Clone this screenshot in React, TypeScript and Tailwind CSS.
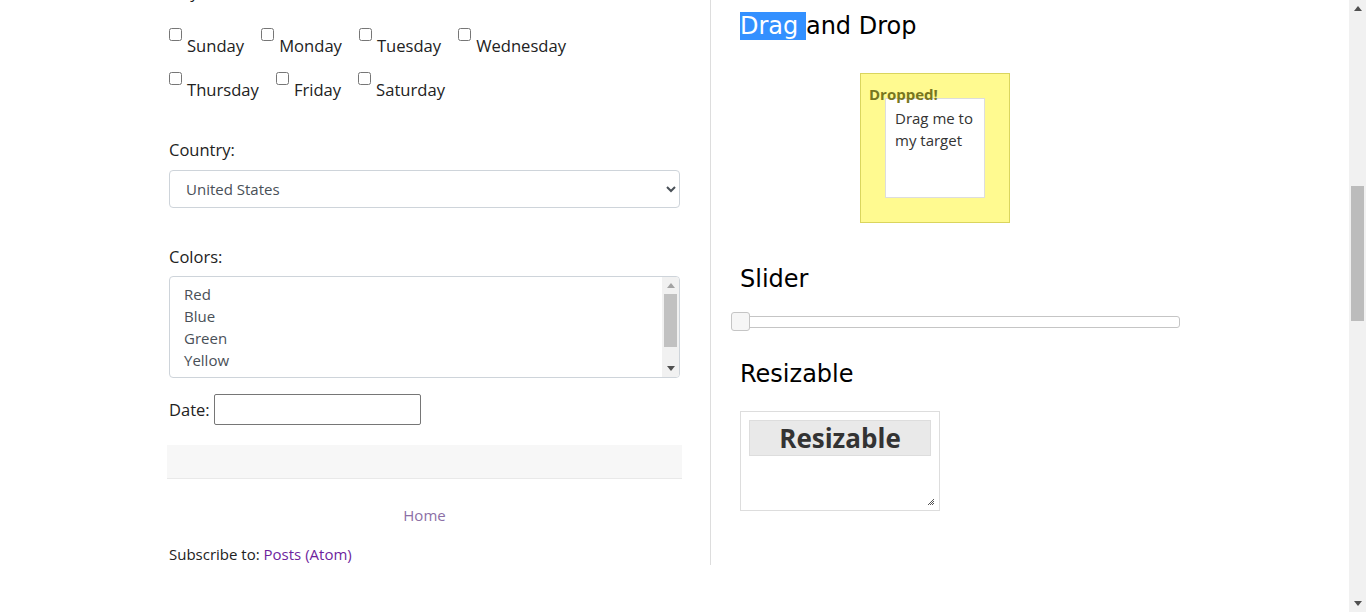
import { useState } from "react";

const days1 = ["Sunday", "Monday", "Tuesday", "Wednesday"];
const days2 = ["Thursday", "Friday", "Saturday"];
const colors = ["Red", "Blue", "Green", "Yellow", "White"];

function DayRow({ days }: { days: string[] }) {
  return (
    <div className="flex h-[44px] items-start gap-x-[17px]">
      {days.map((d) => (
        <label key={d} className="flex items-start">
          <input type="checkbox" className="m-0 mt-[3px] mr-[5px] size-[13px]" />
          <span className="mt-[9px] text-[16.6px] leading-[24px]">{d}</span>
        </label>
      ))}
    </div>
  );
}

export default function App() {
  const [country, setCountry] = useState("us");

  return (
    <div className="flex h-[612px] overflow-hidden bg-white text-[#222]" style={{ fontFamily: "'Open Sans', sans-serif" }}>
      <div className="flex flex-1">
        {/* LEFT COLUMN */}
        <div className="ml-[167px] flex w-[515px] flex-col text-[16.5px]">
          <div className="mt-[-20px] px-[2px] leading-[24px]">Days:</div>
          <div className="mt-[21px] px-[2px]">
            <DayRow days={days1} />
            <DayRow days={days2} />
          </div>

          <div className="mt-[25px] px-[2px]">
            <div className="leading-[24px]">Country:</div>
            <select
              value={country}
              onChange={(e) => setCountry(e.target.value)}
              className="mt-[8px] h-[38px] w-full rounded-[4px] border border-[#ced4da] bg-white pl-[12px] pr-[8px] text-[15px] text-[#495057]"
            >
              <option value="us">United States</option>
              <option value="ca">Canada</option>
              <option value="uk">United Kingdom</option>
            </select>
          </div>

          <div className="mt-[37px] px-[2px]">
            <div className="leading-[24px]">Colors:</div>
            <div className="mt-[7px] flex h-[102px] overflow-hidden rounded-[4px] border border-[#ced4da] text-[15px] text-[#495057]">
              <div className="flex-1 pt-[6px] pl-[14px]">
                {colors.map((c) => (
                  <div key={c} className="h-[22px] leading-[22px]">{c}</div>
                ))}
              </div>
              <div className="flex w-[17px] flex-col bg-[#f1f1f1]">
                <div className="flex h-[17px] items-center justify-center">
                  <svg width="8" height="5" viewBox="0 0 8 5"><path d="M4 0L8 5H0z" fill="#a3a3a3" /></svg>
                </div>
                <div className="mx-[2px] h-[53px] bg-[#c1c1c1]" />
                <div className="flex-1" />
                <div className="flex h-[17px] items-center justify-center">
                  <svg width="8" height="5" viewBox="0 0 8 5"><path d="M0 0H8L4 5z" fill="#505050" /></svg>
                </div>
              </div>
            </div>
          </div>

          <div className="mt-[16px] flex items-center px-[2px]">
            <span className="leading-[24px]">Date:</span>
            <input type="text" className="ml-[4px] h-[31px] w-[207px] rounded-[2px] border border-[#767676] bg-white" />
          </div>

          <div className="mt-[20px] h-[34px] border-b border-[#e9e9e9] bg-[#f7f7f7]" />

          <div className="mt-[24px] text-center text-[15px] leading-[24px] text-[#8c6fa6]">Home</div>

          <div className="mt-[15px] px-[2px] text-[15px] leading-[24px]">
            Subscribe to: <span className="text-[#6e1f9e]">Posts (Atom)</span>
          </div>
        </div>

        {/* DIVIDER */}
        <div className="ml-[28px] h-[565px] w-px bg-[#dddddd]" />

        {/* RIGHT COLUMN */}
        <div className="ml-[29px] flex w-[460px] flex-col" style={{ fontFamily: "'DejaVu Sans', Verdana, sans-serif" }}>
          <h2 className="mt-[12px] text-[24px] leading-[29px] text-black">
            <span className="bg-[#3390ff] text-white">Drag </span>and Drop
          </h2>

          <div className="mt-[32px] ml-[120px] h-[150px] w-[150px] border border-[#dad55e] bg-[#fffa90] pt-[10px] pl-[8px]" style={{ fontFamily: "'Open Sans', sans-serif" }}>
            <div className="text-[15px] leading-[20px] font-bold text-[#777620]">Dropped!</div>
            <div className="mt-[-6px] ml-[16px] h-[100px] w-[100px] border border-[#dddddd] bg-white px-[9px] pt-[8px] text-[15px] leading-[22px] text-[#333]">
              Drag me to my target
            </div>
          </div>

          <h2 className="mt-[42px] text-[24px] leading-[29px] text-black">Slider</h2>
          <div className="relative mt-[22px] ml-[-9px] h-[12px] w-[449px] rounded-[3px] border border-[#c5c5c5] bg-white">
            <div className="absolute top-[-5px] left-[-1px] h-[19px] w-[19px] rounded-[3px] border border-[#c5c5c5] bg-[#f6f6f6]" />
          </div>

          <h2 className="mt-[32px] text-[24px] leading-[29px] text-black">Resizable</h2>
          <div className="relative mt-[22px] h-[100px] w-[200px] border border-[#dddddd] bg-white p-[8px]" style={{ fontFamily: "'Open Sans', sans-serif" }}>
            <div className="flex h-[36px] items-center justify-center border border-[#dddddd] bg-[#e9e9e9] text-[26px] font-bold text-[#333]">
              Resizable
            </div>
            <svg className="absolute right-[4px] bottom-[4px]" width="8" height="8" viewBox="0 0 8 8">
              <path d="M7 1L1 7M7 3L3 7M7 5L5 7" stroke="#555" strokeWidth="1" />
            </svg>
          </div>
        </div>
      </div>

      {/* PAGE SCROLLBAR */}
      <div className="flex w-[17px] flex-col bg-[#f1f1f1]">
        <div className="flex h-[17px] items-center justify-center">
          <svg width="8" height="5" viewBox="0 0 8 5"><path d="M4 0L8 5H0z" fill="#505050" /></svg>
        </div>
        <div className="mt-[169px] mx-[2px] h-[135px] bg-[#bcbcbc]" />
        <div className="flex-1" />
        <div className="flex h-[17px] items-center justify-center">
          <svg width="8" height="5" viewBox="0 0 8 5"><path d="M0 0H8L4 5z" fill="#505050" /></svg>
        </div>
      </div>
    </div>
  );
}
